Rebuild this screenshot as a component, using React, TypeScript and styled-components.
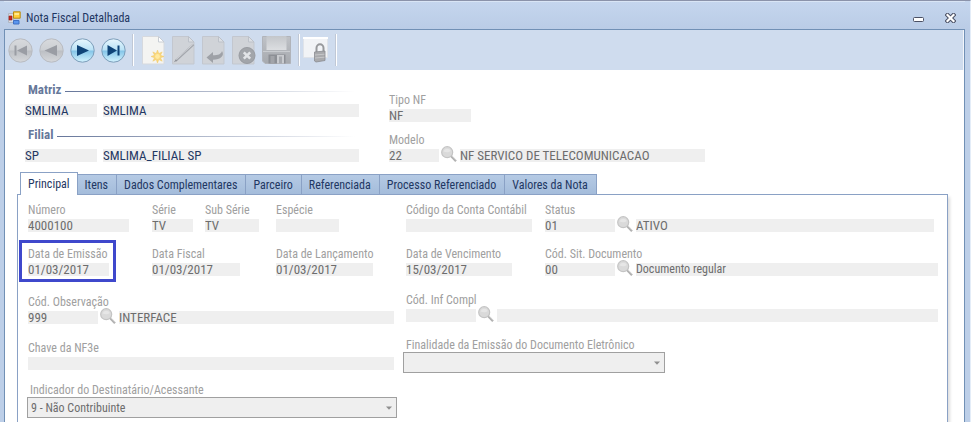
import React, { useId, useState } from "react";
import styled, { createGlobalStyle, css } from "styled-components";

const uiFont = '"Roboto Condensed", Roboto, Tahoma, sans-serif';

const GlobalStyle = createGlobalStyle`
  *, *::before, *::after { box-sizing: border-box; }
  html, body, #root { height: 100%; }
  body { margin: 0; background: #bdcfe8; overflow: hidden; }
  button, input, select { font: inherit; margin: 0; }
`;

const Window = styled.div`
  display: flex;
  flex-direction: column;
  min-height: 100vh;
  padding: 0 5px 0 4px;
  border-top: 1px solid #8b93aa;
  border-right: 1px solid #e4edf8;
  background: linear-gradient(#c5d6ee, #bacce6 28px, #bdcfe8 60px);
  font-family: ${uiFont};
  font-size: 12px;
  color: #1f3763;
`;

const TitleBar = styled.header`
  display: flex;
  align-items: center;
  height: 28px;
  padding: 5px 7px 0 4px;
  box-shadow: inset 0 1px #d9e5f5;
`;

const Title = styled.h1`
  flex: 1;
  margin: 0 0 0 5px;
  font-size: 12px;
  font-weight: 400;
  line-height: 16px;
`;

const CaptionButton = styled.button`
  display: grid;
  place-items: center;
  width: 32px;
  height: 20px;
  padding: 0;
  border: 0;
  background: none;

  &:last-child { width: 16px; margin-left: 8px; }
`;

const Body = styled.main`
  flex: 1;
  display: flex;
  flex-direction: column;
  border: 1px solid #7190b5;
  border-bottom: 0;
  background: #fff;
`;

const Toolbar = styled.div`
  display: flex;
  align-items: center;
  height: 40px;
  padding: 0 3px;
  background: #cfdcee;
  border-right: 1px solid #f3f6fb;
`;

const ToolGroup = styled.div`
  display: flex;
  align-items: center;
  gap: 6px;
`;

const ToolButton = styled.button`
  display: block;
  padding: 0;
  border: 0;
  background: none;

  svg { display: block; }
`;

const Divider = styled.span<{ $after: number }>`
  width: 2px;
  height: 32px;
  margin: 0 ${(p) => p.$after}px 0 6px;
  border-left: 1px solid #c0c8d5;
  background: #fff;
`;

const Content = styled.div`
  flex: 1;
  display: flex;
  flex-direction: column;
  padding: 10px 16px 0 12px;
`;

const Company = styled.section`
  display: flex;
  gap: 30px;
  padding-left: 8px;
`;

const CompanyGroups = styled.div`
  width: 334px;
`;

const DocumentType = styled.div`
  display: flex;
  flex-direction: column;
  gap: 10px;
  flex: 1;
  max-width: 316px;
  padding-top: 12px;
`;

const Group = styled.fieldset`
  margin: 0;
  padding: 0;
  border: 0;
  & + & { margin-top: 8px; }
`;

const GroupTitle = styled.div`
  display: flex;
  align-items: center;
  gap: 4px;
  height: 18px;
  margin-bottom: 6px;
  padding: 0 4px 0 3px;
  color: #66789a;
  font-size: 13px;
  font-weight: 700;

  &::after {
    content: "";
    flex: 1;
    height: 1px;
    margin-top: 4px;
    background: linear-gradient(90deg, #66769a, #fff);
  }
`;

const Row = styled.div<{ $gap: number }>`
  display: flex;
  align-items: flex-end;
  gap: ${(p) => p.$gap}px;
`;

const Value = styled.input<{ $w?: number; $dark?: boolean; $size?: number }>`
  ${(p) => (p.$w ? `width: ${p.$w}px; flex: none;` : "flex: 1; width: 100%;")}
  display: block;
  min-width: 0;
  height: 13px;
  padding: 0;
  border: 0;
  border-radius: 0;
  outline: 0;
  background: #efefef;
  color: ${(p) => (p.$dark ? "#1f3763" : "#6d6d6d")};
  font-size: ${(p) => p.$size ?? 13}px;
  line-height: 13px;
`;

const FieldBox = styled.div<{ $marked?: boolean; $inset?: number }>`
  position: relative;
  min-width: 0;
  padding-right: ${(p) => p.$inset ?? 0}px;

  ${(p) =>
    p.$marked &&
    css`
      &::after {
        content: "";
        position: absolute;
        inset: -6px -7px -6px -9px;
        border: 3px solid #3f48cc;
        pointer-events: none;
      }
    `}
`;

const Caption = styled.label`
  display: block;
  height: 17px;
  color: #a0a0a0;
  font-size: 12px;
  line-height: 17px;
  white-space: nowrap;
`;

const LookupRow = styled.div`
  display: flex;
  align-items: flex-end;
  height: 13px;
`;

const LookupButton = styled.button`
  flex: none;
  width: 21px;
  height: 16px;
  padding: 0 3px 0 2px;
  border: 0;
  background: none;

  svg { display: block; }
`;

const Tabs = styled.div`
  display: flex;
  align-items: flex-end;
  height: 22px;
  margin-top: 10px;
  padding-left: 3px;
`;

const Tab = styled.button<{ $active: boolean }>`
  height: 20px;
  padding: 0 8px 0 7px;
  border: 1px solid #8aa1c5;
  border-bottom: 0;
  background: linear-gradient(#b5cae4, #a4bcdb);
  color: #1f3763;
  line-height: 20px;
  white-space: nowrap;

  & + & { border-left: 0; }

  ${(p) =>
    p.$active &&
    css`
      position: relative;
      height: 23px;
      margin-bottom: -1px;
      padding: 0 7px;
      background: #fff;
    `}
`;

const Panel = styled.section`
  flex: 1;
  padding: 7px 9px 4px 10px;
  border: 1px solid #8aa1c5;
  border-bottom: 0;
  box-shadow: 2px 3px 3px #dedede;
`;

const Grid = styled.div`
  display: grid;
  grid-template-columns: 124px 124px 130px 139px 1fr;
  row-gap: 14px;
`;

const Columns = styled.div`
  display: grid;
  grid-template-columns: 366px 1fr;
  column-gap: 12px;
  margin-top: 16px;
`;

const Column = styled.div<{ $top?: number }>`
  display: flex;
  flex-direction: column;
  padding-top: ${(p) => p.$top ?? 0}px;
`;

const Spacer = styled.div<{ $h: number }>`
  height: ${(p) => p.$h}px;
`;

const SelectField = styled.div<{ $w: number; $indent: number }>`
  width: ${(p) => p.$w}px;
  margin-left: ${(p) => -p.$indent}px;

  ${Caption} {
    padding-left: 3px;
    line-height: 20px;
  }
`;

const SelectBox = styled.div`
  position: relative;

  svg {
    position: absolute;
    right: 5px;
    top: 9px;
    pointer-events: none;
  }
`;

const Select = styled.select`
  display: block;
  appearance: none;
  width: 100%;
  height: 21px;
  padding: 0 20px 0 3px;
  border: 1px solid #a0a0a0;
  border-radius: 0;
  background: #efefef;
  color: #6d6d6d;
  font-size: 12px;
`;

function Field(props: { label: string; value?: string; w?: number; marked?: boolean }) {
  const id = useId();
  return (
    <FieldBox $marked={props.marked}>
      <Caption htmlFor={id}>{props.label}</Caption>
      <Value id={id} $w={props.w} readOnly defaultValue={props.value ?? ""} />
    </FieldBox>
  );
}

function Magnifier() {
  return (
    <svg width="16" height="16" viewBox="0 0 16 16">
      <path d="M10 10l5 5.200" stroke="#b0b0b0" strokeWidth="2.200" />
      <path d="M10.600 9.600l4.800 5" stroke="#dadada" strokeWidth=".8" />
      <circle cx="6.200" cy="6.200" r="5.500" fill="#dadada" stroke="#c4c4c4" strokeWidth="1.200" />
      <path d="M2.400 5.600a4 4 0 0 1 7.400-.6c-2 1.600-4.600 1.800-7.400.6z" fill="#e6e6e6" />
    </svg>
  );
}

function Lookup(props: {
  label: string;
  code?: string;
  text?: string;
  w: number;
  textSize?: number;
  inset?: number;
}) {
  const id = useId();
  return (
    <FieldBox $inset={props.inset}>
      <Caption htmlFor={id}>{props.label}</Caption>
      <LookupRow>
        <Value id={id} $w={props.w} readOnly defaultValue={props.code ?? ""} />
        <LookupButton type="button" aria-label={`Pesquisar ${props.label}`}>
          <Magnifier />
        </LookupButton>
        <Value
          aria-label={`${props.label} descrição`}
          $size={props.textSize}
          readOnly
          defaultValue={props.text ?? ""}
        />
      </LookupRow>
    </FieldBox>
  );
}

function Dropdown(props: { label: string; value: string; w: number; indent: number }) {
  const id = useId();
  return (
    <SelectField $w={props.w} $indent={props.indent}>
      <Caption htmlFor={id}>{props.label}</Caption>
      <SelectBox>
        <Select id={id} defaultValue={props.value}>
          <option value={props.value}>{props.value}</option>
        </Select>
        <svg width="6" height="4" viewBox="0 0 6 4">
          <path d="M0 .5h6L3 3.800z" fill="#8f8f8f" />
        </svg>
      </SelectBox>
    </SelectField>
  );
}

function NavIcon({ kind, active }: { kind: "first" | "prev" | "next" | "last"; active?: boolean }) {
  const fill = active ? "#0f4478" : "#9a9da4";
  const id = `nav-${kind}`;
  return (
    <svg width="25" height="25" viewBox="0 0 25 25">
      <defs>
        <linearGradient id={id} x1="0" y1="0" x2="0" y2="1">
          <stop offset="0" stopColor={active ? "#e8f7fe" : "#d8dadd"} />
          <stop offset=".48" stopColor={active ? "#b9e2f6" : "#cccfd3"} />
          <stop offset=".52" stopColor={active ? "#84c5e8" : "#bcbfc4"} />
          <stop offset="1" stopColor={active ? "#d5f4ff" : "#d6d8db"} />
        </linearGradient>
      </defs>
      <circle cx="12.500" cy="12.500" r="11.700" fill={`url(#${id})`} stroke={active ? "#7c9db9" : "#b8bbc1"} />
      {kind === "first" && <path d="M6.500 7.500h2v10h-2zM19 7.500v10l-10-5z" fill={fill} />}
      {kind === "prev" && <path d="M18 7v11l-12.500-5.500z" fill={fill} />}
      {kind === "next" && <path d="M7 7v11l12-5.500z" fill={fill} />}
      {kind === "last" && <path d="M6.500 7v11l9.500-5.500zM16.500 7.500h2v10h-2z" fill={fill} />}
    </svg>
  );
}

function Sheet({ bright, children }: { bright?: boolean; children?: React.ReactNode }) {
  return (
    <svg width="24" height="29" viewBox="0 0 24 29">
      <path
        d="M.5.5h16l5.500 5.500v22H.5z"
        fill={bright ? "#f4f4f2" : "#d0d3d8"}
        stroke={bright ? "#d6d9de" : "#c3c7cf"}
      />
      <path d="M16.500.5V6H22z" fill={bright ? "#fff" : "#dcdfe4"} stroke={bright ? "#c8cdd4" : "#bcc1c9"} />
      {children}
    </svg>
  );
}

function FloppyIcon() {
  return (
    <svg width="30" height="28" viewBox="0 0 30 28">
      <defs>
        <linearGradient id="floppy" x1="0" y1="0" x2="0" y2="1">
          <stop offset="0" stopColor="#bfc2c7" />
          <stop offset="1" stopColor="#a6a9ae" />
        </linearGradient>
        <linearGradient id="shutter" x1="0" y1="0" x2="0" y2="1">
          <stop offset="0" stopColor="#c3c6ca" />
          <stop offset="1" stopColor="#dcdee1" />
        </linearGradient>
      </defs>
      <path d="M.5.5h28v27H3L.5 25z" fill="url(#floppy)" stroke="#b1b4ba" />
      <path d="M4.500 0h20v14h-20z" fill="url(#shutter)" />
      <path d="M1 15.500h27" stroke="#c9ccd0" />
      <path d="M6.500 18.500h17v9h-17z" fill="#8c8f95" />
      <path d="M8.500 20h4v7.500h-4z" fill="#a2a4a9" />
      <path d="M15 19h7v8.500h-7z" fill="#c9cbcf" />
      <path d="M17 20.500h3v7h-3z" fill="#a6a9ae" />
    </svg>
  );
}

function LockIcon() {
  return (
    <svg width="26" height="26" viewBox="0 0 26 26">
      <path d="M.5.5h24v20H.5z" fill="#f1f3f6" stroke="#dfe3e9" />
      <path d="M0 0h25v2H0z" fill="#fff" />
      <path d="M13.500 15v-4a3.500 3.800 0 0 1 7 0v4" fill="none" stroke="#97999c" strokeWidth="2" />
      <path d="M11.500 15l10.500-1v9.500L13 25l-1.500-1z" fill="#a9aaad" stroke="#8a8c90" strokeWidth=".8" />
      <path d="M12 18l9.500-.8M12 21l9.500-.8" stroke="#c6c7c9" />
    </svg>
  );
}

function FormIcon() {
  return (
    <svg width="13" height="14" viewBox="0 0 13 14">
      <path d="M.5 2.500h5v9h-5z" fill="#d7dce3" stroke="#b1b6c2" />
      <path d="M1 5h3v4H1z" fill="#c7281e" stroke="#9a1d17" strokeWidth=".6" />
      <path d="M5.500.8h6.700v6.400H5.500z" fill="#ffcf3a" stroke="#b98a13" />
      <path d="M6.500 2h4.500v2H6.500z" fill="#ffe88e" />
      <path d="M5.500 9.500H11V13H5.500z" fill="#5b96ee" stroke="#3f70c4" />
    </svg>
  );
}

const tabNames = [
  "Principal",
  "Itens",
  "Dados Complementares",
  "Parceiro",
  "Referenciada",
  "Processo Referenciado",
  "Valores da Nota",
];

export default function App() {
  const [tab, setTab] = useState(tabNames[0]);

  return (
    <>
      <GlobalStyle />
      <Window>
        <TitleBar>
          <FormIcon />
          <Title>Nota Fiscal Detalhada</Title>
          <CaptionButton type="button" aria-label="Minimizar">
            <svg width="11" height="11" viewBox="0 0 11 11">
              <rect x=".5" y="5.500" width="10" height="4" rx="1" fill="#fff" stroke="#4b5064" />
            </svg>
          </CaptionButton>
          <CaptionButton type="button" aria-label="Fechar">
            <svg width="11" height="10" viewBox="0 0 11 10">
              <path d="M2.500 2l6 6M8.500 2l-6 6" stroke="#4b5064" strokeWidth="4.200" strokeLinecap="square" />
              <path d="M2.500 2l6 6M8.500 2l-6 6" stroke="#fff" strokeWidth="2.200" strokeLinecap="square" />
            </svg>
          </CaptionButton>
        </TitleBar>

        <Body>
          <Toolbar>
            <ToolGroup>
              <ToolButton type="button" aria-label="Primeiro"><NavIcon kind="first" /></ToolButton>
              <ToolButton type="button" aria-label="Anterior"><NavIcon kind="prev" /></ToolButton>
              <ToolButton type="button" aria-label="Próximo"><NavIcon kind="next" active /></ToolButton>
              <ToolButton type="button" aria-label="Último"><NavIcon kind="last" active /></ToolButton>
            </ToolGroup>
            <Divider $after={8} />
            <ToolGroup>
              <ToolButton type="button" aria-label="Novo">
                <Sheet bright>
                  <path
                    d="M15.500 14l1.300 3.600 3.400-1.700-1.700 3.400 3.500 1.200-3.500 1.300 1.700 3.400-3.400-1.700-1.300 3.500-1.300-3.500-3.400 1.700 1.700-3.400L9 20.500l3.500-1.200-1.700-3.400 3.400 1.700z"
                    fill="#f8d67a"
                    stroke="#f0c868"
                    strokeWidth=".5"
                  />
                  <circle cx="15.500" cy="20.500" r="2.400" fill="#ffe9a0" />
                </Sheet>
              </ToolButton>
              <ToolButton type="button" aria-label="Editar">
                <Sheet>
                  <path d="M21.500 8.500L3.500 25" stroke="#a4a7ad" strokeWidth="2.200" />
                  <path d="M21 8.300L4 23.700" stroke="#d4d6da" strokeWidth=".9" />
                  <path d="M4 23.500L1.500 26.500l3.800-2z" fill="#8d9096" />
                </Sheet>
              </ToolButton>
              <ToolButton type="button" aria-label="Desfazer">
                <Sheet>
                  <path d="M4.500 21.500l6.500-5.500v3.300c5 0 8-1 9-4.300 3 4.500-1.500 8.800-9 8.800V27z" fill="#9ea1a7" />
                </Sheet>
              </ToolButton>
              <ToolButton type="button" aria-label="Excluir">
                <Sheet>
                  <circle cx="15" cy="19.500" r="8" fill="#a2a5aa" stroke="#989ba1" />
                  <path d="M11.800 16.300l6.400 6.400M18.200 16.300l-6.400 6.400" stroke="#e2e4e7" strokeWidth="2.600" />
                </Sheet>
              </ToolButton>
              <ToolButton type="button" aria-label="Salvar"><FloppyIcon /></ToolButton>
            </ToolGroup>
            <Divider $after={3} />
            <ToolButton type="button" aria-label="Bloquear"><LockIcon /></ToolButton>
            <Divider $after={0} />
          </Toolbar>

          <Content>
            <Company>
              <CompanyGroups>
                <Group aria-label="Matriz">
                  <GroupTitle>Matriz</GroupTitle>
                  <Row $gap={6}>
                    <Value $w={72} $dark readOnly aria-label="Código da matriz" defaultValue="SMLIMA" />
                    <Value $dark readOnly aria-label="Nome da matriz" defaultValue="SMLIMA" />
                  </Row>
                </Group>
                <Group aria-label="Filial">
                  <GroupTitle>Filial</GroupTitle>
                  <Row $gap={6}>
                    <Value $w={72} $dark readOnly aria-label="Código da filial" defaultValue="SP" />
                    <Value $dark readOnly aria-label="Nome da filial" defaultValue="SMLIMA_FILIAL SP" />
                  </Row>
                </Group>
              </CompanyGroups>
              <DocumentType>
                <Field label="Tipo NF" value="NF" w={82} />
                <Lookup label="Modelo" code="22" text="NF SERVICO DE TELECOMUNICACAO" w={50} />
              </DocumentType>
            </Company>

            <Tabs role="tablist">
              {tabNames.map((name) => (
                <Tab
                  key={name}
                  type="button"
                  role="tab"
                  aria-selected={tab === name}
                  $active={tab === name}
                  onClick={() => setTab(name)}
                >
                  {name}
                </Tab>
              ))}
            </Tabs>

            <Panel role="tabpanel">
              <Grid>
                <Field label="Número" value="4000100" w={101} />
                <Row $gap={12}>
                  <Field label="Série" value="TV" w={41} />
                  <Field label="Sub Série" value="TV" w={54} />
                </Row>
                <Field label="Espécie" w={63} />
                <Field label="Código da Conta Contábil" w={126} />
                <Lookup label="Status" code="01" text="ATIVO" w={70} inset={4} />

                <Row $gap={0}>
                  <Field label="Data de Emissão" value="01/03/2017" w={81} marked />
                </Row>
                <Field label="Data Fiscal" value="01/03/2017" w={88} />
                <Field label="Data de Lançamento" value="01/03/2017" w={97} />
                <Field label="Data de Vencimento" value="15/03/2017" w={106} />
                <Lookup label="Cód. Sit. Documento" code="00" text="Documento regular" w={70} textSize={12} />
              </Grid>

              <Columns>
                <Column $top={2}>
                  <Lookup label="Cód. Observação" code="999" text="INTERFACE" w={70} />
                  <Spacer $h={16} />
                  <Field label="Chave da NF3e" />
                  <Spacer $h={10} />
                  <Dropdown label="Indicador do Destinatário/Acessante" value="9 - Não Contribuinte" w={370} indent={1} />
                </Column>
                <Column>
                  <Lookup label="Cód. Inf Compl" w={70} />
                  <Spacer $h={13} />
                  <Dropdown label="Finalidade da Emissão do Documento Eletrônico" value="" w={262} indent={3} />
                </Column>
              </Columns>
            </Panel>
          </Content>
        </Body>
      </Window>
    </>
  );
}
